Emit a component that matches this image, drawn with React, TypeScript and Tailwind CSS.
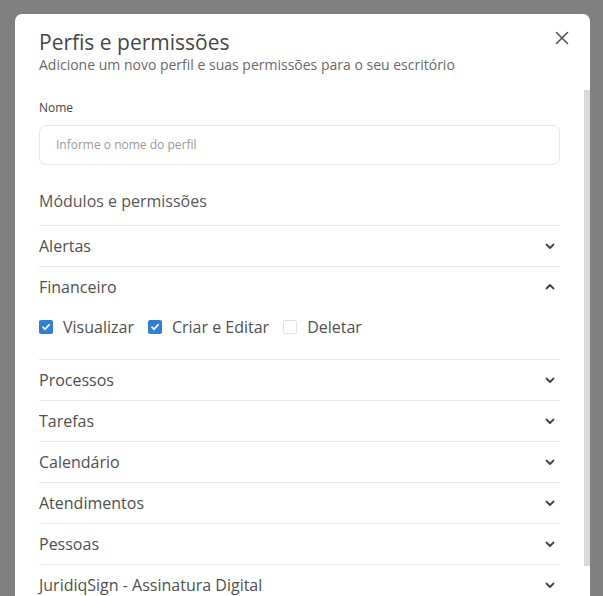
import React from "react";

const Chevron = ({ up = false }: { up?: boolean }) => (
  <svg width="12" height="12" viewBox="0 0 12 12" className="shrink-0">
    <path
      d={up ? "M2.5 7.5 L6 4 L9.5 7.5" : "M2.5 4.5 L6 8 L9.5 4.5"}
      fill="none"
      stroke="#444"
      strokeWidth="1.8"
      strokeLinecap="round"
      strokeLinejoin="round"
    />
  </svg>
);

const Check = ({ checked, label }: { checked: boolean; label: string }) => (
  <div className="flex items-center gap-[10px]">
    {checked ? (
      <div className="w-[14px] h-[14px] rounded-[2px] bg-[#2f7fd4] flex items-center justify-center">
        <svg width="10" height="10" viewBox="0 0 10 10">
          <path d="M2 5.2 L4.1 7.3 L8.2 2.6" fill="none" stroke="white" strokeWidth="1.7" strokeLinecap="round" strokeLinejoin="round" />
        </svg>
      </div>
    ) : (
      <div className="w-[14px] h-[14px] rounded-[2px] border-[1.5px] border-[#dce3eb] bg-white" />
    )}
    <span className="text-[16px] leading-[20px] text-[#505050]">{label}</span>
  </div>
);

const Row = ({ label }: { label: string }) => (
  <div className="h-[41px] border-t border-[#e4e8ee] flex items-center justify-between pr-[4px]">
    <span className="text-[16px] text-[#505050]">{label}</span>
    <Chevron />
  </div>
);

export default function App() {
  return (
    <div
      className="w-[603px] h-[596px] overflow-hidden bg-[#808080] pt-[14px] pl-[15px]"
      style={{ fontFamily: "'Open Sans', sans-serif" }}
    >
      <div className="w-[575px] h-[600px] bg-white rounded-t-[7px] flex flex-col">
        <div className="flex justify-between items-start pl-[24px] pr-[21px] pt-[16px] h-[76px]">
          <div>
            <div className="text-[21px] leading-[24px] text-[#464646]">Perfis e permissões</div>
            <div className="text-[14px] leading-[22px] text-[#6a6a6a]">
              Adicione um novo perfil e suas permissões para o seu escritório
            </div>
          </div>
          <svg width="14" height="14" viewBox="0 0 14 14" className="mt-[1px]">
            <path d="M1.5 1.5 L12.5 12.5 M12.5 1.5 L1.5 12.5" stroke="#555" strokeWidth="1.6" strokeLinecap="round" />
          </svg>
        </div>
        <div className="flex flex-1">
          <div className="flex-1 pl-[24px] pr-[24px] pt-[6px]">
            <div className="text-[12px] leading-[24px] text-[#444]">Nome</div>
            <div className="mt-[5px] h-[40px] rounded-[7px] border border-[#e5e7eb] flex items-center pl-[16px]">
              <span className="text-[12px] text-[#9a9a9a]">Informe o nome do perfil</span>
            </div>
            <div className="mt-[24px] text-[16px] leading-[24px] text-[#585858]">Módulos e permissões</div>
            <div className="mt-[12px]">
              <Row label="Alertas" />
              <div className="border-t border-[#e4e8ee]">
                <div className="h-[40px] flex items-center justify-between pr-[4px]">
                  <span className="text-[16px] text-[#505050]">Financeiro</span>
                  <Chevron up />
                </div>
                <div className="flex items-center gap-[14px] pt-[10px] pb-[22px]">
                  <Check checked label="Visualizar" />
                  <Check checked label="Criar e Editar" />
                  <Check checked={false} label="Deletar" />
                </div>
              </div>
              <Row label="Processos" />
              <Row label="Tarefas" />
              <Row label="Calendário" />
              <Row label="Atendimentos" />
              <Row label="Pessoas" />
              <Row label="JuridiqSign - Assinatura Digital" />
            </div>
          </div>
          <div className="w-[6px] pt-0">
            <div className="h-[476px] bg-[#d9d9d9]" />
          </div>
        </div>
      </div>
    </div>
  );
}
